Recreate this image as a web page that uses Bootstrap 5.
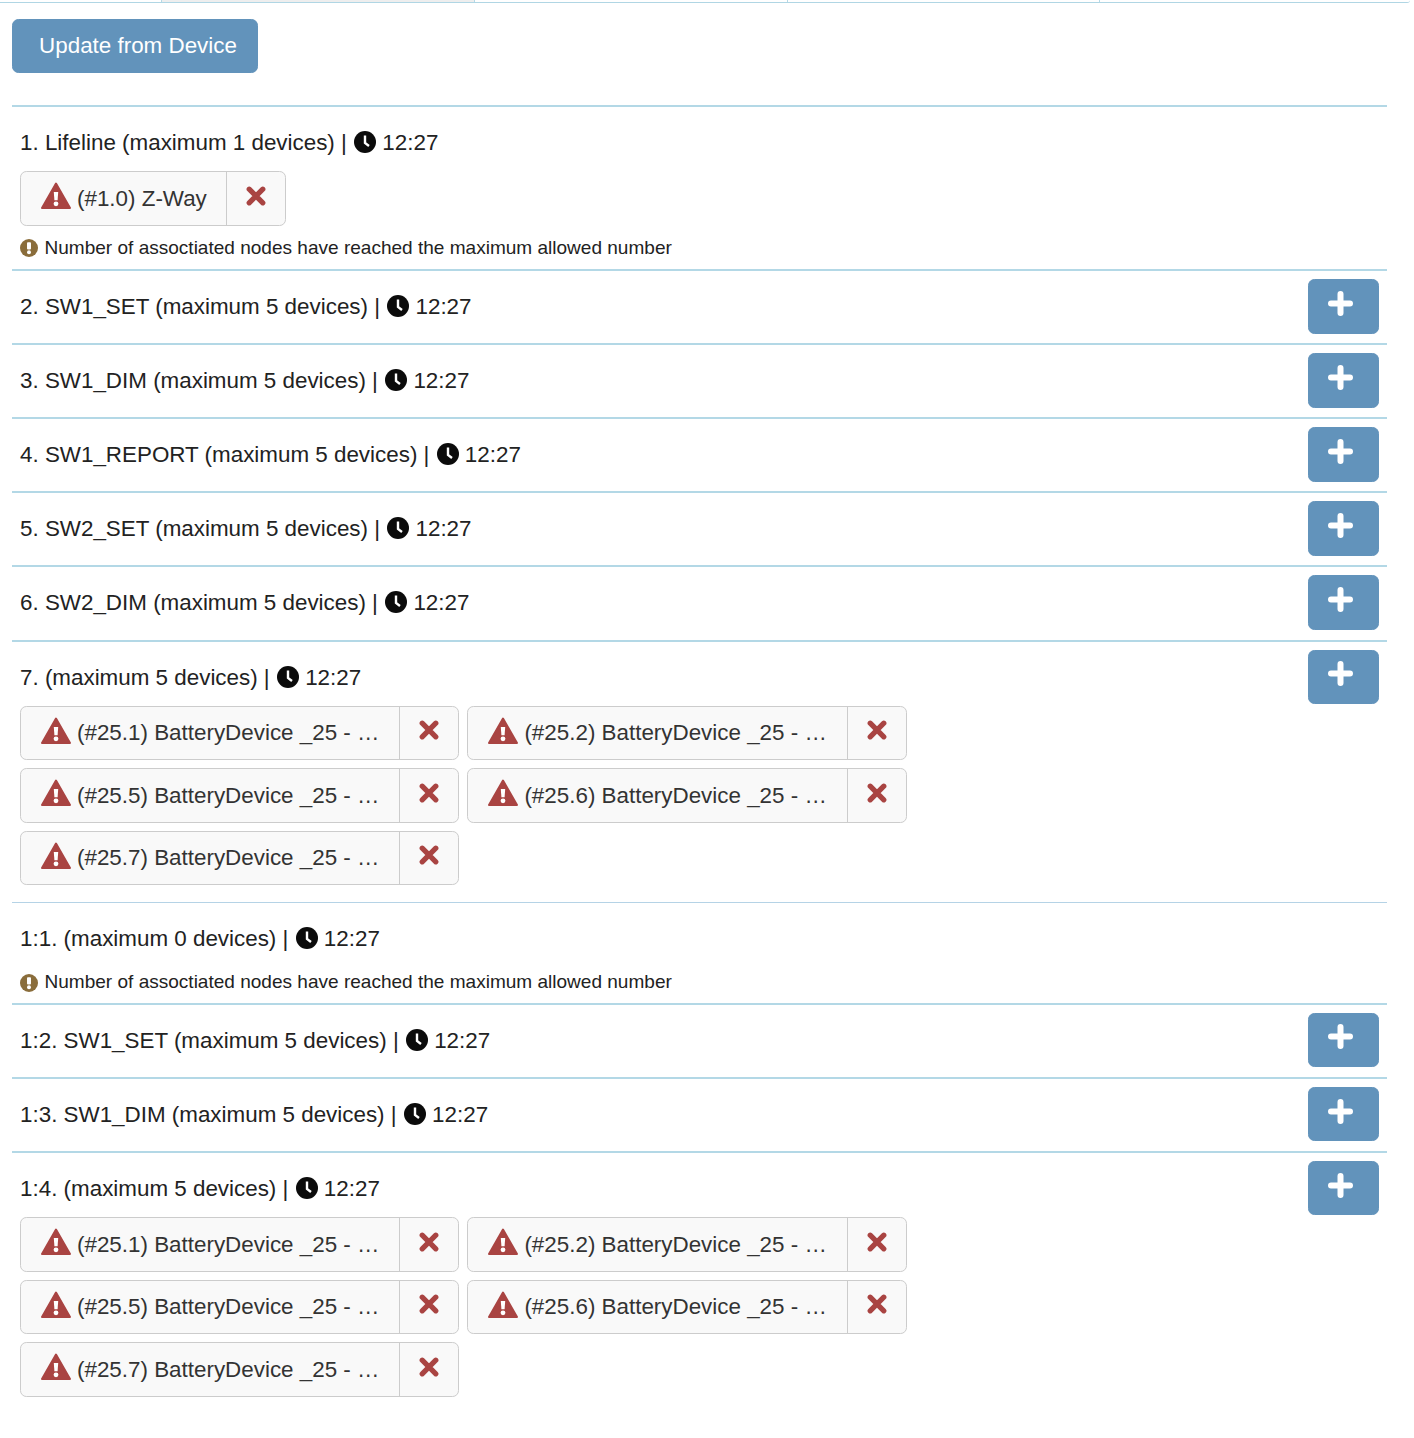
<!DOCTYPE html>
<html lang="en">
<head>
<meta charset="utf-8">
<title>Associations</title>
<link href="https://cdn.jsdelivr.net/npm/bootstrap@5.3.0/dist/css/bootstrap.min.css" rel="stylesheet">
<style>
html,body{background:#fff;}
body{font-family:"Liberation Sans",Arial,sans-serif;font-size:22.4px;color:#222;line-height:32px;overflow:hidden;}
.tabstrip{height:3px;border-bottom:1px solid #b0d6e4;margin-right:4px;border-bottom-right-radius:4px;}
.tabstrip span{display:block;border-right:1px solid #b5d9e6;height:2px;box-sizing:border-box;}
.tab-a{width:162px;}
.tab-b{width:313px;background:#eee;}
.tab-c{width:313px;}
.tab-d{width:312px;}
.page{padding:16px 27px 0 12px;}
.btn-up{background:#6293bb;border:1px solid #6293bb;color:#fff;border-radius:6.4px;}
.btn-up:hover{background:#6293bb;border-color:#6293bb;color:#fff;}
.btn-main{width:246px;height:54.4px;padding:0 0 0 6px;margin-bottom:32px;display:block;font-size:22.4px;line-height:32px;}
.btn-add{width:71px;height:54.4px;padding:0 6px 6px 0;flex:none;margin-right:0;display:flex;align-items:center;justify-content:center;}
.btn-add svg{width:25px;height:25px;}
.assoc{border-top:2px solid #b3d8e6;padding:8px 8px 9.7px 8px;display:flex;justify-content:space-between;align-items:flex-start;}
.assoc.thin{border-top:1px solid #b5d3e6;}
.assoc-body{flex:1 1 auto;min-width:0;padding-top:12px;}
.node-list{margin-top:12.4px;margin-bottom:-.9px;max-width:900px;gap:8.2px 8px;}
.node-list.mb-space{margin-top:12px;margin-bottom:9px;}
.node{display:flex;height:54.4px;border:1px solid #ccc;border-radius:6.4px;background:#f9f9f9;color:#333;}
.node-name{width:378.4px;padding:0 20px;display:flex;align-items:center;white-space:nowrap;}
.node-name.short{width:205px;}
.node-x{width:59px;border-left:1px solid #ccc;display:flex;align-items:center;justify-content:center;padding-bottom:6px;}
.warn-ico{width:30px;height:27px;margin-right:6px;flex:none;margin-top:-5.5px;}
.x-ico{width:20px;height:20px;}
.note{font-size:19.05px;line-height:26.6px;color:#222;display:flex;align-items:center;gap:6.5px;margin-bottom:-1.95px;}
.note-top{margin-top:14px;margin-bottom:-2.75px;}
.note svg{width:18px;height:18px;flex:none;}
.clk{width:22px;height:22px;vertical-align:-3px;margin:0 0 0 1px;}
</style>
</head>
<body>
<svg width="0" height="0" class="d-block position-absolute">
<defs>
<symbol id="i-clock" viewBox="0 0 22 22"><circle cx="11" cy="11" r="11" fill="#0b0b0b"/><path d="M11 4.5V12l4 3" fill="none" stroke="#fff" stroke-width="2.4"/></symbol>
<symbol id="i-warn" viewBox="0 0 30 27"><path d="M15 1.5 29 26H1z" fill="#a94442" stroke="#a94442" stroke-width="2" stroke-linejoin="round"/><path d="M12.8 10h4.4l-.6 8.2h-3.2z" fill="#fff"/><circle cx="15" cy="21.8" r="2.4" fill="#fff"/></symbol>
<symbol id="i-x" viewBox="0 0 20 20"><path d="M3.2 3.2 16.8 16.8M16.8 3.2 3.2 16.8" stroke="#a94442" stroke-width="5.2" stroke-linecap="round"/></symbol>
<symbol id="i-plus" viewBox="0 0 25 25"><path d="M12.5 3v19M3 12.5h19" stroke="#fff" stroke-width="6" stroke-linecap="round"/></symbol>
<symbol id="i-note" viewBox="0 0 19 19"><circle cx="9.5" cy="9.5" r="9.5" fill="#8a6d3b"/><rect x="7.4" y="3.5" width="4.2" height="7.5" rx="1" fill="#fff"/><circle cx="9.5" cy="14" r="2.1" fill="#fff"/></symbol>
</defs>
</svg>
<div class="tabstrip d-flex"><span class="tab-a"></span><span class="tab-b"></span><span class="tab-c"></span><span class="tab-d"></span></div>
<div class="page">
<button class="btn btn-up btn-main">Update from Device</button>

<div class="assoc">
  <div class="assoc-body">
    <div>1. Lifeline (maximum 1 devices) | <svg class="clk"><use href="#i-clock"/></svg> 12:27</div>
    <div class="d-flex flex-wrap node-list mb-space">
      <div class="node"><div class="node-name short"><svg class="warn-ico"><use href="#i-warn"/></svg>(#1.0) Z-Way</div><div class="node-x"><svg class="x-ico"><use href="#i-x"/></svg></div></div>
    </div>
    <div class="note"><svg><use href="#i-note"/></svg>Number of assoctiated nodes have reached the maximum allowed number</div>
  </div>
</div>

<div class="assoc"><div class="assoc-body">2. SW1_SET (maximum 5 devices) | <svg class="clk"><use href="#i-clock"/></svg> 12:27</div><button class="btn btn-up btn-add"><svg><use href="#i-plus"/></svg></button></div>
<div class="assoc"><div class="assoc-body">3. SW1_DIM (maximum 5 devices) | <svg class="clk"><use href="#i-clock"/></svg> 12:27</div><button class="btn btn-up btn-add"><svg><use href="#i-plus"/></svg></button></div>
<div class="assoc"><div class="assoc-body">4. SW1_REPORT (maximum 5 devices) | <svg class="clk"><use href="#i-clock"/></svg> 12:27</div><button class="btn btn-up btn-add"><svg><use href="#i-plus"/></svg></button></div>
<div class="assoc"><div class="assoc-body">5. SW2_SET (maximum 5 devices) | <svg class="clk"><use href="#i-clock"/></svg> 12:27</div><button class="btn btn-up btn-add"><svg><use href="#i-plus"/></svg></button></div>
<div class="assoc"><div class="assoc-body">6. SW2_DIM (maximum 5 devices) | <svg class="clk"><use href="#i-clock"/></svg> 12:27</div><button class="btn btn-up btn-add"><svg><use href="#i-plus"/></svg></button></div>

<div class="assoc">
  <div class="assoc-body">
    <div>7. (maximum 5 devices) | <svg class="clk"><use href="#i-clock"/></svg> 12:27</div>
    <div class="d-flex flex-wrap node-list">
      <div class="node"><div class="node-name"><svg class="warn-ico"><use href="#i-warn"/></svg>(#25.1) BatteryDevice _25 - …</div><div class="node-x"><svg class="x-ico"><use href="#i-x"/></svg></div></div>
      <div class="node"><div class="node-name"><svg class="warn-ico"><use href="#i-warn"/></svg>(#25.2) BatteryDevice _25 - …</div><div class="node-x"><svg class="x-ico"><use href="#i-x"/></svg></div></div>
      <div class="node"><div class="node-name"><svg class="warn-ico"><use href="#i-warn"/></svg>(#25.5) BatteryDevice _25 - …</div><div class="node-x"><svg class="x-ico"><use href="#i-x"/></svg></div></div>
      <div class="node"><div class="node-name"><svg class="warn-ico"><use href="#i-warn"/></svg>(#25.6) BatteryDevice _25 - …</div><div class="node-x"><svg class="x-ico"><use href="#i-x"/></svg></div></div>
      <div class="node"><div class="node-name"><svg class="warn-ico"><use href="#i-warn"/></svg>(#25.7) BatteryDevice _25 - …</div><div class="node-x"><svg class="x-ico"><use href="#i-x"/></svg></div></div>
    </div>
    <div class="mb-2"></div>
  </div>
  <button class="btn btn-up btn-add"><svg><use href="#i-plus"/></svg></button>
</div>

<div class="assoc thin">
  <div class="assoc-body">
    <div>1:1. (maximum 0 devices) | <svg class="clk"><use href="#i-clock"/></svg> 12:27</div>
    <div class="note note-top"><svg><use href="#i-note"/></svg>Number of assoctiated nodes have reached the maximum allowed number</div>
  </div>
</div>

<div class="assoc"><div class="assoc-body">1:2. SW1_SET (maximum 5 devices) | <svg class="clk"><use href="#i-clock"/></svg> 12:27</div><button class="btn btn-up btn-add"><svg><use href="#i-plus"/></svg></button></div>
<div class="assoc"><div class="assoc-body">1:3. SW1_DIM (maximum 5 devices) | <svg class="clk"><use href="#i-clock"/></svg> 12:27</div><button class="btn btn-up btn-add"><svg><use href="#i-plus"/></svg></button></div>

<div class="assoc">
  <div class="assoc-body">
    <div>1:4. (maximum 5 devices) | <svg class="clk"><use href="#i-clock"/></svg> 12:27</div>
    <div class="d-flex flex-wrap node-list">
      <div class="node"><div class="node-name"><svg class="warn-ico"><use href="#i-warn"/></svg>(#25.1) BatteryDevice _25 - …</div><div class="node-x"><svg class="x-ico"><use href="#i-x"/></svg></div></div>
      <div class="node"><div class="node-name"><svg class="warn-ico"><use href="#i-warn"/></svg>(#25.2) BatteryDevice _25 - …</div><div class="node-x"><svg class="x-ico"><use href="#i-x"/></svg></div></div>
      <div class="node"><div class="node-name"><svg class="warn-ico"><use href="#i-warn"/></svg>(#25.5) BatteryDevice _25 - …</div><div class="node-x"><svg class="x-ico"><use href="#i-x"/></svg></div></div>
      <div class="node"><div class="node-name"><svg class="warn-ico"><use href="#i-warn"/></svg>(#25.6) BatteryDevice _25 - …</div><div class="node-x"><svg class="x-ico"><use href="#i-x"/></svg></div></div>
      <div class="node"><div class="node-name"><svg class="warn-ico"><use href="#i-warn"/></svg>(#25.7) BatteryDevice _25 - …</div><div class="node-x"><svg class="x-ico"><use href="#i-x"/></svg></div></div>
    </div>
  </div>
  <button class="btn btn-up btn-add"><svg><use href="#i-plus"/></svg></button>
</div>
</div>
</body>
</html>
